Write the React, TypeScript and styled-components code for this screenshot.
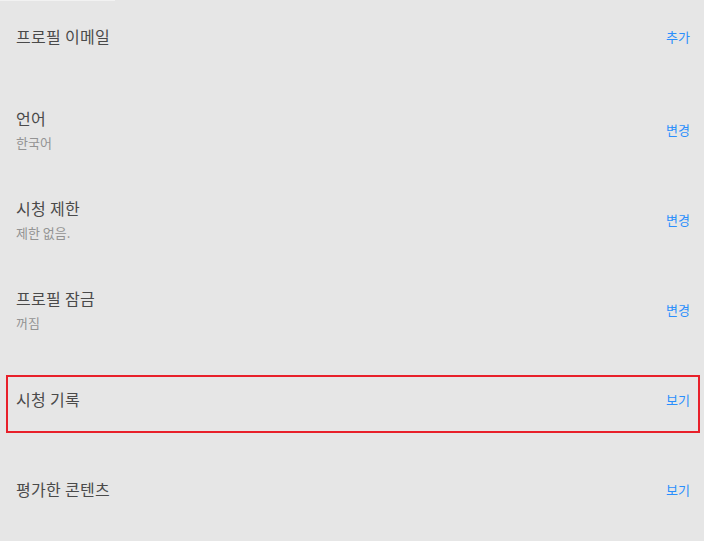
import React from 'react'
import styled, { createGlobalStyle } from 'styled-components'

type Setting = {
  title: string
  value?: string
  action: string
  highlighted?: boolean
}

const settings: Setting[] = [
  { title: '프로필 이메일', action: '추가' },
  { title: '언어', value: '한국어', action: '변경' },
  { title: '시청 제한', value: '제한 없음.', action: '변경' },
  { title: '프로필 잠금', value: '꺼짐', action: '변경' },
  { title: '시청 기록', action: '보기', highlighted: true },
  { title: '평가한 콘텐츠', action: '보기' },
]

export default function App() {
  return (
    <>
      <GlobalStyle />
      <Page>
        <TopStrip />
        <List>
          {settings.map((s) => (
            <Row key={s.title} $highlighted={s.highlighted}>
              <Info>
                <Title>{s.title}</Title>
                {s.value && <Value>{s.value}</Value>}
              </Info>
              <Action href="#">{s.action}</Action>
            </Row>
          ))}
        </List>
      </Page>
    </>
  )
}

const GlobalStyle = createGlobalStyle`
  html, body {
    margin: 0;
    padding: 0;
    background: #e6e6e6;
  }
  body {
    font-family: "Noto Sans CJK KR", "Noto Sans", sans-serif;
  }
`;

const Page = styled.div`
  width: 704px;
  height: 541px;
  overflow: hidden;
  background: #e6e6e6;
  display: flex;
  flex-direction: column;
`;

const TopStrip = styled.div`
  width: 115px;
  height: 1px;
  background: #f2f2f2;
  flex-shrink: 0;
`;

const List = styled.div`
  display: flex;
  flex-direction: column;
  margin-top: -7px;
`;

const Row = styled.div<{ $highlighted?: boolean }>`
  position: relative;
  height: 90px;
  box-sizing: border-box;
  display: flex;
  align-items: center;
  justify-content: space-between;
  padding: 0 14px 0 16px;

  &:first-child {
    padding-bottom: 6px;
  }

  ${({ $highlighted }) =>
    $highlighted &&
    `
    &::after {
      content: '';
      position: absolute;
      left: 6px;
      right: 4px;
      top: 21px;
      height: 54px;
      border: 2px solid #e8202a;
      pointer-events: none;
    }
  `}
`;

const Info = styled.div`
  display: flex;
  flex-direction: column;
  gap: 6px;
`;

const Title = styled.div`
  font-size: 16px;
  line-height: 20px;
  letter-spacing: 0.3px;
  color: #4a4a4a;
`;

const Value = styled.div`
  font-size: 13px;
  line-height: 17px;
  color: #939393;
`;

const Action = styled.a`
  font-size: 13px;
  line-height: 17px;
  color: #2b8ffc;
  text-decoration: none;
`;
